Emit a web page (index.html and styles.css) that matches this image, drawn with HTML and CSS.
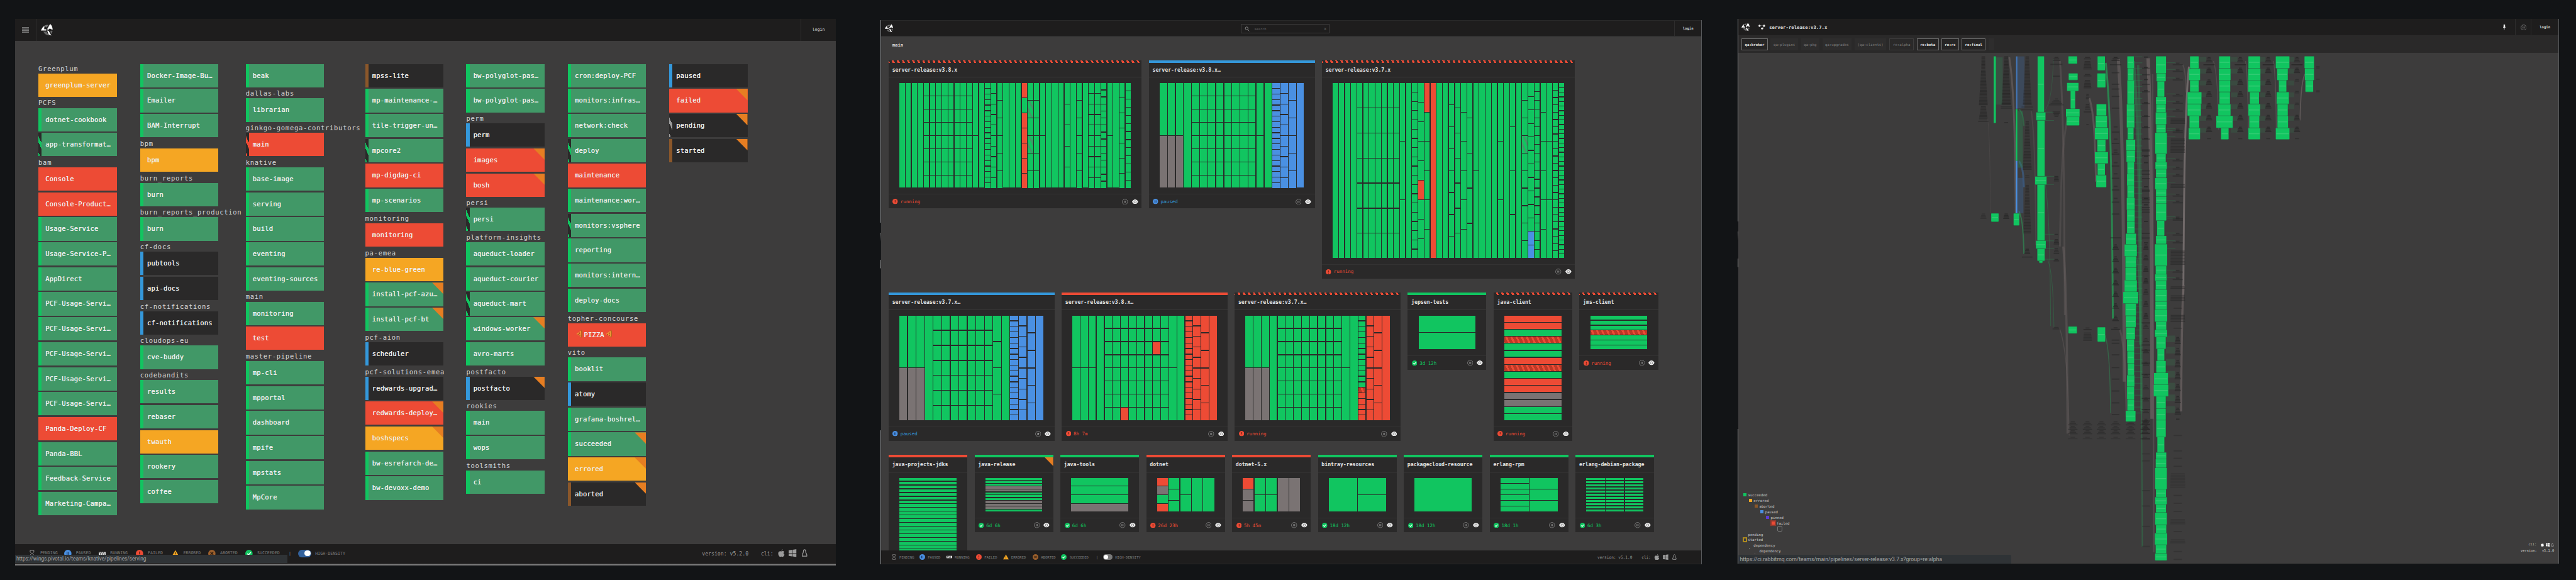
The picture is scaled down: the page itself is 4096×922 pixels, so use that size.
FILE: index.html
```html
<!DOCTYPE html>
<html lang="en">
<head>
<meta charset="utf-8">
<title>Concourse dashboards</title>
<link rel="stylesheet" href="styles.css">
</head>
<body>
<svg class="defs" width="0" height="0">
  <symbol id="i-logo" viewBox="0 0 20 20">
    <path fill="#fff" d="M0 11 Q2 6 6 3 L5.5 9 L9 9 L9 11 Z"/>
    <path fill="#777" d="M6 3 Q10 1 13 2 L9 6 Z"/>
    <path fill="#fff" d="M15.500 0 Q20 4 19.500 10 L15 7.500 L12 10 L10.500 8.600 Z"/>
    <path fill="#fff" d="M10.500 11 L13 11.500 L17.500 19.500 L13 18 Z"/>
    <path fill="#666" d="M4 13 L9.500 13 L13 19.500 Q7 18.500 4 13 Z M18 11 L19.500 12 L18 17 L15.500 13 Z"/>
  </symbol>
  <symbol id="i-pending" viewBox="0 0 12 12"><path fill="none" stroke="#9b9b9b" d="M3 1H9V3.500L6.600 6L9 8.500V11H3V8.500L5.400 6L3 3.500Z"/></symbol>
  <symbol id="i-paused" viewBox="0 0 12 12"><circle cx="6" cy="6" r="6" fill="#4a90e2"/><path stroke="#1e3c66" stroke-width="1.300" d="M4.700 3.500V8.500M7.300 3.500V8.500"/></symbol>
  <symbol id="i-running" viewBox="0 0 12 12"><path fill="#ddd" d="M0 3.500H12V8.500H0Z"/><path stroke="#333" stroke-width="1" d="M1.500 3L3.500 9M4.500 3L6.500 9M7.500 3L9.500 9"/></symbol>
  <symbol id="i-failed" viewBox="0 0 12 12"><circle cx="6" cy="6" r="6" fill="#ed4b35"/><path stroke="#5b1d14" stroke-width="1.400" d="M6 2.800V7M6 8V9.400"/></symbol>
  <symbol id="i-errored" viewBox="0 0 12 12"><path fill="#f5a623" d="M6 .5L12 11H0Z"/><path stroke="#3a2a10" stroke-width="1.200" d="M6 4V7.500M6 8.500V9.700"/></symbol>
  <symbol id="i-aborted" viewBox="0 0 12 12"><circle cx="6" cy="6" r="6" fill="#9b5f2c"/><path stroke="#2b1b0e" stroke-width="1.400" d="M3.800 3.800L8.200 8.200M8.200 3.800L3.800 8.200"/></symbol>
  <symbol id="i-succeeded" viewBox="0 0 12 12"><circle cx="6" cy="6" r="6" fill="#11c560"/><path fill="none" stroke="#fff" stroke-width="1.500" d="M3.200 6.200L5.300 8.200L9 4"/></symbol>
  <symbol id="i-pause" viewBox="0 0 12 12"><circle cx="6" cy="6" r="5.300" fill="none" stroke="#8d8d8d"/><path stroke="#9b9b9b" stroke-width="1.100" d="M4.800 4V8M7.200 4V8"/></symbol>
  <symbol id="i-play" viewBox="0 0 12 12"><circle cx="6" cy="6" r="5.300" fill="none" stroke="#8d8d8d"/><path fill="#ccc" d="M4.600 3.700L8.400 6L4.600 8.300Z"/></symbol>
  <symbol id="i-eye" viewBox="0 0 12 9"><path fill="#eee" d="M0 4.500Q2.500 0 6 0T12 4.500Q9.500 9 6 9T0 4.500Z"/><circle cx="6" cy="4.500" r="2.300" fill="none" stroke="#777"/></symbol>
  <symbol id="i-apple" viewBox="0 0 12 14"><path d="M8.600 0Q8.800 2 6.300 3.200Q6 1.300 8.600 0ZM10 7.300Q10 5.500 11.500 4.700Q9.700 2.700 6.300 4Q2.500 2.700 1 5.300Q-.3 9.500 2.600 13Q3.800 14.200 6.200 13.100Q8.800 14.200 9.800 12.900Q11.200 11.500 11.800 9.700Q10 9 10 7.300Z"/></symbol>
  <symbol id="i-windows" viewBox="0 0 12 12"><path d="M0 1.700L5.200 1V5.700H0ZM6 .9L12 0V5.700H6ZM0 6.400H5.200V11L0 10.300ZM6 6.400H12V12L6 11.100Z"/></symbol>
  <symbol id="i-linux" viewBox="0 0 12 14"><path fill="none" stroke="currentColor" stroke-width="1.400" d="M6 1Q8 1 8 4Q8 6 9.500 8.500Q10.500 10.500 10 12.500H7.500H4.500H2Q1.500 10.500 2.500 8.500Q4 6 4 4Q4 1 6 1Z"/></symbol>
  <symbol id="i-pizza" viewBox="0 0 12 14"><path fill="#f2a53a" d="M1.500 7.500L9.500 2L9.500 12.500Z"/><path fill="none" stroke="#b5651d" stroke-width="2" stroke-linecap="round" d="M10 1.500Q12 7 10 12.500"/><circle cx="7" cy="6" r="1.200" fill="#a8261b"/><circle cx="7.500" cy="9.500" r="1.100" fill="#a8261b"/><circle cx="4.500" cy="8" r=".9" fill="#a8261b"/></symbol>
</svg>

<main class="screens">
  <section class="screen screen-hd">
    <header class="topbar">
      <div class="menu"><svg width="11" height="9" viewBox="0 0 11 9"><path stroke="#777" stroke-width="1.400" d="M0 .8H11M0 3.300H11M0 5.800H11M0 8.200H11"/></svg></div>
      <svg class="logo"><use href="#i-logo"/></svg>
      <div class="login">login</div>
    </header>
    <div class="columns" id="columns"></div>
    <footer class="legend" data-legend></footer>
    <div class="status">https://wings.pivotal.io/teams/knative/pipelines/serving</div>
  </section>

  <section class="screen screen-dash">
    <header class="topbar">
      <svg class="logo"><use href="#i-logo"/></svg>
      <div class="search">
        <svg width="8" height="8" viewBox="0 0 8 8"><circle cx="3.300" cy="3" r="2.200" fill="none" stroke="#888"/><path stroke="#888" d="M5 4.800L7.300 7.500"/></svg>
        <span>search</span><span class="clear">x</span>
      </div>
      <div class="login">login</div>
    </header>
    <div class="team">main</div>
    <div class="rows" id="rows"></div>
    <footer class="legend" data-legend></footer>
  </section>

  <section class="screen screen-pipe">
    <header class="topbar">
      <svg class="logo"><use href="#i-logo"/></svg>
      <svg class="crumb" viewBox="0 0 11 8"><path stroke="#ddd" stroke-width=".6" d="M2 2H9L6 7"/><circle cx="1.800" cy="2" r="1.700" fill="#eee"/><circle cx="9.200" cy="2" r="1.700" fill="#eee"/><circle cx="6" cy="6.200" r="1.700" fill="#eee"/></svg>
      <span class="name">server-release:v3.7.x</span>
      <div class="pin"><svg width="4" height="8" viewBox="0 0 4 8"><path fill="#eee" d="M.8 0H3.200V3L4 5H2.400V8H1.600V5H0L.8 3Z"/></svg></div>
      <div class="pausebox"><svg width="9.500" height="9.500"><use href="#i-pause"/></svg></div>
      <div class="login">login</div>
    </header>
    <nav class="groups">
      <span class="group on" style="width:41.6px">qa:broker</span>
      <span class="group" style="width:43.4px">qa:plugins</span>
      <span class="group" style="width:29.5px">qa:pkg</span>
      <span class="group" style="width:46.4px">qa:upgrades</span>
      <span class="group" style="width:50.7px">(qa:clients)</span>
      <span class="group hover" style="width:39px">re:alpha</span>
      <span class="group on" style="width:34.7px">re:beta</span>
      <span class="group on" style="width:27.3px">re:rc</span>
      <span class="group on" style="width:38.2px">re:final</span>
      <span class="group" style="width:9px"></span>
    </nav>
    <svg class="graph" id="graph" viewBox="2764 84.300 1305 811.400"></svg>
    <ul class="keys">
      <li><i class="sq succeeded"></i>succeeded</li>
      <li><i class="sq errored"></i>errored</li>
      <li><i class="sq aborted"></i>aborted</li>
      <li><i class="sq paused"></i>paused</li>
      <li><i class="sq pinned"></i>pinned</li>
      <li><i class="sq failed"></i>failed</li>
      <li><i class="sq pending"></i></li>
      <li><i class="sq none"></i>pending</li>
      <li><i class="sq started"></i>started</li>
      <li><i class="sq dash"></i>dependency</li>
      <li><i class="sq dash"></i>dependency</li>
    </ul>
    <div class="versions">
      <div>cli:<svg width="5" height="6"><use href="#i-apple"/></svg><svg width="6" height="6"><use href="#i-windows"/></svg><svg width="5" height="6"><use href="#i-linux"/></svg></div>
      <div>version:<span>v5.1.0</span></div>
    </div>
    <div class="status">https://ci.rabbitmq.com/teams/main/pipelines/server-release:v3.7.x?group=re:alpha</div>
  </section>
</main>
<script src="app.js"></script>
</body>
</html>
```
FILE: styles.css
```css
* { box-sizing: border-box; }
body {
  margin: 0;
  width: 4096px;
  height: 922px;
  overflow: hidden;
  background: #121416;
  color: #e6e7e8;
  font-family: "DejaVu Sans Mono", monospace;
}
.defs { display: block; height: 0; }
.screens { display: flex; align-items: flex-start; padding-left: 24.3px; }
.screen { position: relative; flex: none; display: flex; flex-direction: column; background: #3d3c3c; overflow: hidden; }
.topbar { display: flex; align-items: center; background: #1e1d1d; flex: none; }
.login { display: flex; align-items: center; justify-content: center; align-self: stretch; border-left: 1px solid #2e2d2d; margin-left: auto; color: #ddd; }
.status {
  position: absolute; left: 0; overflow: hidden; white-space: nowrap;
  background: #2f3336; color: #a5a7a8;
  font-family: Roboto, sans-serif;
}
.legend { display: flex; align-items: center; background: #1e1d1d; color: #7d7d7d; flex: none; }
.legend .items { display: grid; align-items: center; }
.legend .item { display: flex; align-items: center; }
.legend .item svg { flex: none; }
.legend .right { display: flex; align-items: center; margin-left: auto; color: #9b9b9b; fill: #9b9b9b; white-space: pre; }
.toggle { display: flex; border-radius: 9px; background: #7a7a7a; }
.toggle::after { content: ""; background: #fff; border-radius: 50%; }

/* high density dashboard */
.screen-hd { width: 1304.8px; height: 868.6px; margin-top: 30.4px; }
.screen-hd::after { content: ""; height: 3.2px; flex: none; background: linear-gradient(#333, #8a8a8a 60%, #555); }
.screen-hd .topbar { height: 34.2px; }
.screen-hd .menu { width: 33.4px; align-self: stretch; display: flex; align-items: center; justify-content: center; border-right: 1px solid #2e2d2d; }
.screen-hd .logo { width: 19px; height: 19px; margin-left: 7.500px; }
.screen-hd .login { width: 56.3px; font-size: 6.700px; }
.columns { flex: 1; display: grid; grid-template-columns: 161.7px 167.9px 189.9px 160.9px 161.3px 161.3px 125px; padding: 37.1px 0 0 36.8px; align-content: start; }
.column { width: 124.5px; }
.group-name { height: 15.1px; line-height: 15.1px; font-size: 10.5px; letter-spacing: .7px; white-space: nowrap; color: #d6d6d6; }
.pipe { position: relative; display: flex; height: 37.15px; margin-bottom: 2.55px; background: #2a2929; }
.pipe .band { width: 5.200px; background: var(--band); }
.pipe .name { flex: 1; padding-left: 6px; line-height: 37px; font-size: 10.5px; letter-spacing: .16px; white-space: pre; color: #eee; text-shadow: 0 0 .4px #eee; }
.pipe .name svg { width: 11.500px; height: 13px; vertical-align: -1px; margin: 0 1.500px; }
.pipe.green { --band: #11c560; background: #419867; }
.pipe.red { --band: #ed4b35; background: #ed4b35; }
.pipe.yellow { --band: #f5a623; background: #f5a623; }
.pipe.blue { --band: #3498db; }
.pipe.brown { --band: #8b572a; }
.pipe.grey { --band: #9b9b9b; }
.pipe.run .band { background: repeating-linear-gradient(-115deg, #2a2929 0, #2a2929 6.800px, var(--band) 6.800px, var(--band) 10.900px); }
.corner { position: absolute; right: 0; top: 0; background: #e67e22; width: 18px; height: 18.200px; clip-path: polygon(0 0, 100% 0, 100% 100%); }
.screen-hd .legend { height: 30.6px; padding: 0 44px 2px 21px; font-size: 6.600px; }
.screen-hd .items { grid-template-columns: 56.8px 54.6px 59.8px 56.4px 58.5px 59px 68.5px 15.2px auto; }
.screen-hd .item svg { width: 11.800px; height: 11.800px; margin-right: 6.800px; }
.screen-hd .toggle { width: 20.8px; height: 12px; padding: 1.200px; justify-content: flex-end; background: #33619b; margin-right: 6.500px; }
.screen-hd .toggle::after { width: 9.600px; }
.screen-hd .right { font-size: 8.200px; }
.screen-hd .right svg { width: 12.500px; height: 12.500px; margin-left: 6px; }
.screen-hd .status { top: 852.1px; width: 433.2px; height: 13px; line-height: 13px; padding-left: 1.700px; font-size: 8.250px; }

/* pipeline previews */
.screen-dash { width: 1306.2px; height: 865.7px; margin: 31.8px 0 0 71.1px; border-right: 1px solid #57595b; }
.screen-dash::before, .screen-pipe::before {
  content: ""; position: absolute; left: 0; top: 0; bottom: 0; width: 1.300px; z-index: 2;
  background: linear-gradient(#8a8c8e 322px, #17181a 322px, #17181a 338px, #777 338px, #17181a 352px, #17181a 381px, #888 381px, #999 394px, #17181a 395px, #17181a 652px, #8a8c8e 652px);
}
.screen-dash .topbar { height: 26.3px; border-top: 1px solid #292929; border-bottom: .7px solid #292929; position: relative; }
.screen-dash .logo { width: 13.200px; height: 14px; margin-left: 6.400px; }
.search { position: absolute; left: 573.2px; top: 5.700px; width: 140.8px; height: 14.8px; border: 1px solid #3d3c3c; display: flex; align-items: center; padding: 0 4px 0 5px; font-size: 5.300px; color: #606060; }
.search svg { margin-right: 7px; }
.search .clear { margin-left: auto; font-size: 7px; }
.screen-dash .login, .screen-pipe .login { width: 43.5px; font-size: 5.600px; font-weight: bold; }
.team { height: 38px; padding: 8.500px 0 0 18.500px; font-size: 7.300px; line-height: 10px; font-weight: bold; color: #ddd; }
.rows { flex: 1; overflow: hidden; padding-left: 12.8px; display: flex; flex-direction: column; gap: 22.8px; }
.row { display: flex; gap: 11.450px; align-items: flex-start; flex: none; }
.card { position: relative; flex: none; background: #2a2929; display: flex; flex-direction: column; }
.card .bar { height: 3.700px; background: var(--bar); }
.card.run .bar { background: repeating-linear-gradient(-115deg, #2a2929 0, #2a2929 4.300px, var(--bar) 4.300px, var(--bar) 7.350px); }
.card .title { height: 23.5px; border-bottom: 1.200px solid #3a3939; padding: 0 0 1px 5.700px; font-size: 8.200px; line-height: 22.5px; font-weight: bold; white-space: nowrap; color: #e2e2e2; }
.card .corner { top: 3.700px; width: 13.500px; height: 13.800px; }
.card .mosaic { margin: 9.200px 17.200px 10px; }
.mosaic { display: flex; gap: 1.300px; }
.mosaic .mc { flex: 1; display: flex; flex-direction: column; gap: 1.300px; }
.mosaic i { flex: 1; background: #11c560; min-height: 0; }
.mosaic i.r { background: #ed4b35; }
.mosaic i.b { background: #4a90e2; }
.mosaic i.n { background: #7a7373; }
.mosaic i.s { background: repeating-linear-gradient(-115deg, #bd3826 0, #bd3826 4.500px, #ed4b35 4.500px, #ed4b35 7.400px); }
.mosaic i.t { background: repeating-linear-gradient(-115deg, #11c560 0, #11c560 4.500px, #419867 4.500px, #419867 7.400px); }
.card .foot { height: 22.7px; border-top: 1.200px solid #333232; display: flex; align-items: center; padding: 0 5.500px 0 6.500px; font-size: 7.500px; color: var(--ink); }
.card .foot .st { width: 8.600px; height: 8.600px; margin-right: 3.700px; }
.card .foot .ctl { width: 9.600px; height: 9.600px; margin-left: auto; }
.card .foot .eye { width: 9.800px; height: 7.600px; margin-left: 6px; }
.card.red { --bar: #ed4b35; --ink: #ed4b35; }
.card.blue { --bar: #3498db; --ink: #3498db; }
.card.green { --bar: #11c560; --ink: #11c560; }
.screen-dash .legend { height: 22.4px; padding: 0 39px 0 16.600px; font-size: 5.600px; position: relative; z-index: 1; border-bottom: 1px solid #292929; }
.screen-dash .items { grid-template-columns: 45.1px 42.9px 47.3px 42.5px 47.3px 45.5px 55.3px 11.1px auto; }
.screen-dash .item svg { width: 9px; height: 9px; margin-right: 4.300px; }
.screen-dash .toggle { width: 15px; height: 9px; padding: 1px; margin-right: 4.500px; }
.screen-dash .toggle::after { width: 7px; }
.screen-dash .right { font-size: 6.150px; }
.screen-dash .right svg { width: 8.800px; height: 9.300px; margin-left: 5px; }

/* pipeline graph */
.screen-pipe { width: 1305.9px; height: 865.3px; margin: 30.4px 0 0 56.6px; border-right: 1px solid #57595b; }
.screen-pipe .topbar { height: 25.9px; }
.screen-pipe .logo { width: 13.200px; height: 14px; margin-left: 6.200px; }
.screen-pipe .crumb { width: 10.800px; height: 8px; margin: 0 6.500px 0 13.500px; }
.screen-pipe .topbar .name { font-size: 7.300px; font-weight: bold; color: #ddd; }
.screen-pipe .pin { margin-left: auto; padding-right: 15.500px; display: flex; }
.screen-pipe .pausebox { width: 25px; align-self: stretch; display: flex; align-items: center; justify-content: center; border-left: 1px solid #2e2d2d; }
.screen-pipe .login { margin-left: 0; }
.groups { display: flex; gap: 4.700px; height: 28px; padding: 5px 0 0 6.200px; background: #2a2929; font-size: 5.700px; flex: none; align-items: flex-start; }
.group { flex: none; height: 18.600px; display: flex; align-items: center; justify-content: center; background: #2e2d2d; color: #7d7d7d; border: 1px solid #2e2d2d; }
.group.hover { border-color: #3d3c3c; background: #2a2929; }
.group.on { border-color: #6e6e6e; background: #262525; color: #e6e7e8; font-weight: bold; }
.graph { display: block; width: 1305px; height: 811.4px; flex: none; margin-left: 1px; }
.keys { position: absolute; left: 8.500px; top: 752px; margin: 0; padding: 0; list-style: none; font-size: 5.700px; color: #ccc; }
.keys li { height: 8.960px; display: flex; align-items: center; }
.keys li:nth-child(2), .keys li:nth-child(10) { margin-left: 8.900px; }
.keys li:nth-child(3), .keys li:nth-child(11) { margin-left: 18px; }
.keys li:nth-child(4) { margin-left: 27px; }
.keys li:nth-child(5) { margin-left: 36px; }
.keys li:nth-child(6) { margin-left: 45.500px; }
.keys li:nth-child(7) { margin-left: 54px; }
.sq { width: 5px; height: 5px; margin: 0 2.500px 0 .5px; }
.sq.succeeded { background: #11c560; }
.sq.errored { background: #f5a623; }
.sq.aborted { background: #8b572a; }
.sq.paused { background: #4a90e2; }
.sq.pinned { background: #5c3bd1; }
.sq.failed { background: #ed4b35; box-shadow: 0 0 1px 1.800px #8f3a2f; }
.sq.pending { width: 8.500px; height: 9px; border: 1.200px solid #777; border-radius: 2px; }
.sq.started { width: 7px; height: 8px; margin: 0 1.300px 0 -.5px; border: 2px solid #ad8a1e; }
.sq.dash { width: 1px; height: 1px; margin-right: 6.500px; background: #999; align-self: flex-end; }
.versions { position: absolute; right: 6.500px; top: 831px; font-size: 5.400px; line-height: 9.400px; color: #ccc; fill: #fff; }
.versions div { display: flex; justify-content: flex-end; align-items: center; }
.versions div:first-child svg { margin-left: 2.500px; }
.versions div:first-child svg:first-child { margin-left: 7px; }
.versions span { margin-left: 8px; }
.screen-pipe .status { top: 851.2px; left: 1px; width: 434.5px; height: 14.1px; line-height: 14px; padding-left: 2.500px; font-size: 8.600px; border-radius: 0 2px 0 0; }
```
FILE: app.js
```js
const use = (id, cls) => `<svg${cls ? ` class="${cls}"` : ""}><use href="#i-${id}"/></svg>`;

/* ---- high density columns: "#team" or "state name", "/" = running, "^" = resource error ---- */
const columns = [
  ["#Greenplum", "yellow greenplum-server", "#PCFS", "green dotnet-cookbook", "green/ app-transformat…", "#bam",
   "red Console", "red Console-Product…", "green Usage-Service", "green Usage-Service-P…", "green AppDirect",
   "green PCF-Usage-Servi…", "green PCF-Usage-Servi…", "green PCF-Usage-Servi…", "green PCF-Usage-Servi…", "green PCF-Usage-Servi…",
   "red Panda-Deploy-CF", "green Panda-BBL", "green Feedback-Service", "green Marketing-Campa…"],
  ["green Docker-Image-Bu…", "green Emailer", "green BAM-Interrupt", "#bpm", "yellow bpm", "#burn_reports", "green burn",
   "#burn_reports_production", "green burn", "#cf-docs", "blue pubtools", "blue api-docs", "#cf-notifications",
   "blue cf-notifications", "#cloudops-eu", "green cve-buddy", "#codebandits", "green results", "green rebaser",
   "yellow twauth", "green rookery", "green coffee"],
  ["green beak", "#dallas-labs", "green librarian", "#ginkgo-gomega-contributors", "red/ main", "#knative",
   "green base-image", "green serving", "green build", "green eventing", "green eventing-sources", "#main",
   "green monitoring", "red test", "#master-pipeline", "green mp-cli", "green mpportal", "green dashboard",
   "green mpife", "green mpstats", "green MpCore"],
  ["brown mpss-lite", "green mp-maintenance-…", "green tile-trigger-un…", "green/ mpcore2", "red mp-digdag-ci",
   "green mp-scenarios", "#monitoring", "red monitoring", "#pa-emea", "yellow re-blue-green", "green^ install-pcf-azu…",
   "green^ install-pcf-bt", "#pcf-aion", "blue scheduler", "#pcf-solutions-emea", "blue redwards-upgrad…",
   "red^ redwards-deploy…", "yellow^ boshspecs", "green bw-esrefarch-de…", "green bw-devoxx-demo"],
  ["green bw-polyglot-pas…", "green bw-polyglot-pas…", "#perm", "blue perm", "red^ images", "red^ bosh", "#persi",
   "green/ persi", "#platform-insights", "green aqueduct-loader", "green aqueduct-courier", "green/ aqueduct-mart",
   "green^ windows-worker", "green avro-marts", "#postfacto", "blue^ postfacto", "#rookies", "green main",
   "green wops", "#toolsmiths", "green ci"],
  ["green cron:deploy-PCF", "green monitors:infras…", "green network:check", "green/ deploy", "red maintenance",
   "green maintenance:wor…", "green/ monitors:vsphere", "green reporting", "green monitors:intern…", "green deploy-docs",
   "#topher-concourse", "red *PIZZA*", "#vito", "green booklit", "blue atomy", "green grafana-boshrel…",
   "green^ succeeded", "yellow^ errored", "brown^ aborted"],
  ["blue paused", "red^ failed", "grey/^ pending", "brown^ started"],
];
document.getElementById("columns").innerHTML = columns.map(col => `<div class="column">${col.map(entry => {
  if (entry[0] === "#") return `<div class="group-name">${entry.slice(1)}</div>`;
  const [flags, name] = entry.split(" ");
  const state = flags.replace(/[/^]/g, "");
  return `<div class="pipe ${state}${flags.includes("/") ? " run" : ""}"><span class="band"></span>` +
    `<span class="name">${name.replace(/\*/g, use("pizza"))}</span>${flags.includes("^") ? '<span class="corner"></span>' : ""}</div>`;
}).join("")}</div>`).join("");

/* ---- pipeline preview cards ---- */
/* column spec: "count", "count color", or a string of cell colours; "xN" repeats the column */
const G = "g";
const expand = spec => spec.split(",").flatMap(part => {
  const [body, times] = part.trim().split("x");
  const m = body.match(/^(\d+)([a-z]?)$/);
  const cells = m ? (m[2] || G).repeat(+m[1]) : body;
  return Array(+(times || 1)).fill(cells);
});
const wide = "1x4,8x8,2,1,19,10,6,1x3,rgrrrrr,gtgtgg,6,2,1x3,5,1,6,1,10x2,15,2,1,7,13";
const tall = "1x4,7x7,3,1,19,gggggrggg,rggggg,1r,1x2,8,7,6,5,2,1x3,3,1,4,1,gggtgggggg,gggggggggggbb,20,6,3,24,38";
const rows = [
  [["red run", "server-release:v3.8.x", wide, 402.4, 166, "running"],
   ["blue", "server-release:v3.8.x…", "gnx3,1,8x8,2,1,19b,10b,6b,1b", 263.7, 166, "paused"],
   ["red run", "server-release:v3.7.x", tall, 402.4, 277.5, "running"]],
  [["blue", "server-release:v3.7.x…", "gnx3,1,7x7,4,1,19b,10b,6b,1b", 263.7, 166, "paused", "play"],
   ["red", "server-release:v3.8.x…", "2x3,1,8x2,gggggggr,8x3,ggrggggg,8,2,1,19r,10r,6r,1r", 263.7, 166, "8h 7m"],
   ["red run", "server-release:v3.7.x…", "gnx3,1,8x8,2,1,gggggggggggggsrrrrr,10r,6r,1r", 263.7, 166, "running"],
   ["green", "jepsen-tests", "2", 125.1, 53.6, "3d 12h"],
   ["red run", "java-client", "rrgsggrsgrrnngg", 125.1, 166, "running"],
   ["red run", "jms-client", "gggsggg", 125.1, 53.6, "running"]],
  [["red", "java-projects-jdks", "28", 125.1, 166, "running"],
   ["green", "java-release", "gggnngggnnng", 125.1, 53.6, "6d 6h", "pause", true],
   ["green", "java-tools", "gggn", 125.1, 53.6, "6d 6h"],
   ["red", "dotnet", "rngr,3,2,1x2", 125.1, 53.6, "26d 23h"],
   ["red", "dotnet-5.x", "rnn,2x2,1nx2", 125.1, 53.6, "5h 45m"],
   ["green", "bintray-resources", "1,2", 125.1, 53.6, "18d 12h"],
   ["green", "packagecloud-resource", "1", 125.1, 53.6, "18d 12h"],
   ["green", "erlang-rpm", "6,3", 125.1, 53.6, "18d 1h"],
   ["green", "erlang-debian-package", "11x3", 125.1, 53.6, "6d 3h"]],
];
const statusIcon = { red: "failed", blue: "paused", green: "succeeded" };
document.getElementById("rows").innerHTML = rows.map(row => `<div class="row">${row.map(([cls, title, spec, w, h, text, ctl, corner]) =>
  `<article class="card ${cls}" style="width:${w}px"><div class="bar"></div><div class="title">${title}</div>${corner ? '<span class="corner"></span>' : ""}` +
  `<div class="mosaic" style="height:${h}px">${expand(spec).map(c => `<div class="mc">${[...c].map(k => `<i class="${k}"></i>`).join("")}</div>`).join("")}</div>` +
  `<div class="foot">${use(statusIcon[cls.split(" ")[0]], "st")}<span>${text}</span>${use(ctl || "pause", "ctl")}${use("eye", "eye")}</div></article>`
).join("")}</div>`).join("");

/* ---- legends ---- */
const states = ["pending", "paused", "running", "failed", "errored", "aborted", "succeeded"];
document.querySelectorAll("[data-legend]").forEach((el, i) => {
  el.innerHTML = `<div class="items">${states.map(s => `<span class="item">${use(s)}${s.toUpperCase()}</span>`).join("")}` +
    `<span>|</span><span class="item"><span class="toggle"></span>HIGH-DENSITY</span></div>` +
    `<div class="right">version: v5.${2 - i}.0    cli:${use("apple")}${use("windows")}${use("linux")}</div>`;
});

/* ---- pipeline graph ---- */
const LOW = 1558.8;
const left = { x: v => 2733.4 + v * 0.43364 };
const right = { x: v => 3399.7 + v * 0.44405 };
const Y = v => v * 0.29488;
const out = [];
const rect = (s, x0, x1, y0, y1, fill, o = 1) =>
  out.push(`<rect x="${s.x(x0).toFixed(2)}" y="${Y(y0).toFixed(2)}" width="${(s.x(x1) - s.x(x0)).toFixed(2)}" height="${Y(y1 - y0).toFixed(2)}" fill="${fill}" opacity="${o}"/>`);
const edge = (s, x0, y0, x1, y1, color, w, o) => {
  const a = s.x(x0), b = s.x(x1), c = Y(y0), d = Y(y1);
  out.push(`<path d="M${a} ${c}C${a + (b - a) * 0.8} ${c + (d - c) * 0.2} ${a + (b - a) * 0.9} ${c + (d - c) * 0.6} ${b} ${d}" fill="none" stroke="${color}" stroke-width="${w}" opacity="${o}"/>`);
};
const fan = (s, x0, x1, y0, y1, color, o) => rect(s, x0, x1, y0, y1, color, o);
/* a pile of resource names, widening downwards */
const stack = (s, cx, y0, y1, w0, w1, o = 0.6, pitch = 8) => {
  const n = Math.max(1, Math.round((y1 - y0) / pitch));
  for (let i = 0; i < n; i++) {
    const w = w0 + (w1 - w0) * (n > 1 ? i / (n - 1) : 0);
    rect(s, cx - w / 2, cx + w / 2, y0 + i * pitch, y0 + i * pitch + pitch * 0.62, "#242323", o);
  }
};
const bars = (s, cx, w, ys, off = 0, o = 0.5) => ys.forEach(y => rect(s, cx - w / 2, cx + w / 2, y + off - 3, y + off + 3, "#242323", o));
const jobs = (s, off, list) => list.forEach(([x0, x1, y0, y1]) => {
  rect(s, x0 + 1, x1 - 1, y0 + off, y1 + off + 3, "#1f7d48");
  rect(s, x0, x1, y0 + off, y1 + off, "#11c560");
  const m = (y0 + y1) / 2 + off;
  if (x1 - x0 > 15) rect(s, x0 + 2, x1 - 2, m - 2, m + 3, "#4fd183", 0.55);
});

/* dependency lines */
const taupe = "#6b6262";
edge(left, 985, 640, 995, 1150, taupe, 1, 0.25);
edge(left, 1064, 310, 1088, 1150, taupe, 3, 0.6);
edge(left, 1145, 600, 1162, 1320, taupe, 2, 0.3);
edge(left, 1250, 330, 1268, 1700, taupe, 3, 0.4);
edge(left, 1278, 640, 1250, 1330, taupe, 3, 0.35);
edge(left, 1262, 1330, 1278, 780 + LOW, taupe, 3.5, 0.45);
edge(left, 1248, 210 + LOW, 1284, 790 + LOW, taupe, 1.5, 0.4);
edge(left, 1358, 530, 1382, 980, taupe, 3, 0.6);
edge(left, 1464, 320, 1486, 500 + LOW, taupe, 5, 0.6);
edge(left, 1470, 220 + LOW, 1494, 690 + LOW, taupe, 3, 0.4);
edge(left, 1418, 340, 1444, 160 + LOW, "#22a457", 3, 0.7);
edge(left, 1416, 250 + LOW, 1436, 670 + LOW, "#2f8a54", 1.5, 0.5);
edge(left, 1196, 990, 1216, 200 + LOW, "#2f7a4c", 1, 0.5);
edge(left, 1205, 1400, 1228, 205 + LOW, "#2f7a4c", 1, 0.5);
edge(left, 1194, 600, 1226, 320, "#2f7a4c", 1, 0.4);
edge(left, 1100, 590, 1118, 680, "#2f7a4c", 2, 0.6);
edge(left, 1100, 870, 1118, 1010, "#3c6ba5", 3, 0.5);
edge(left, 1100, 1140, 1118, 1370, "#2f8a54", 2, 0.7);
edge(left, 1520, 330, 1545, 300 + LOW, "#2b8f53", 4, 0.45);
edge(left, 1535, 1400, 1552, 1390 + LOW, "#2b8f53", 2, 0.4);
edge(right, 0, 350, 12, 660 + LOW, "#2b8f53", 4, 0.35);
edge(right, 36, 315, 50, 700 + LOW, taupe, 5.500, 0.75);
edge(right, 52, 400, 56, 1420 + LOW, taupe, 2.500, 0.4);
edge(right, 160, 350, 172, 500, taupe, 2, 0.4);
edge(right, 182, 360, 162, 30 + LOW, "#736b6b", 3, 0.95);
edge(right, 163, -20 + LOW, 154, 660 + LOW, taupe, 3.500, 0.75);
edge(right, 270, 330, 288, 700, taupe, 1.500, 0.4);
edge(right, 385, 330, 395, 700, taupe, 1.500, 0.5);
edge(right, 485, 330, 495, 700, taupe, 1.500, 0.5);
edge(right, 597, 400, 580, 650, taupe, 1.800, 0.7);
fan(left, 1015, 1040, 310, 565, "#2c8a52", 0.25);
fan(left, 1094, 1120, 305, 585, "#3c6ba5", 0.3);
fan(left, 1096, 1114, 600, 905, "#2c8a52", 0.35);
fan(left, 1096, 1116, 960, 1150, "#3c6ba5", 0.35);
for (const y of [605, 650, 951, 995, 1263, 1299, 1342, 1398])
  rect(left, 1194, 1228, y - 1, y + 2, "#2c8a52", 0.45);
for (let y = 305; y < 690 + LOW; y += 32) rect(left, 1522, 1552, y, y + 5, "#2c8a52", 0.3);

/* resources */
stack(left, 969, 305, 378, 13, 15, 0.75, 6);
stack(left, 969, 378, 570, 16, 32, 0.7, 6);
stack(left, 969, 574, 645, 18, 32, 0.65, 6);
bars(left, 969, 38, [655]);
stack(left, 1053, 305, 570, 14, 34, 0.75, 6);
bars(left, 1053, 40, [576, 585], 0, 0.4);
stack(left, 1130, 305, 570, 12, 32, 0.6, 6);
bars(left, 1130, 42, [578, 592], 0, 0.35);
stack(left, 1130, 655, 915, 12, 32, 0.6);
stack(left, 1130, 946, 960, 14, 16, 0.4);
stack(left, 1130, 998, 1262, 12, 28, 0.55);
stack(left, 1130, 1342, 1375, 12, 22, 0.7);
bars(left, 1130, 38, [1387], 0, 0.4);
bars(left, 1053, 14, [662]);
stack(left, 969, 1152, 1185, 12, 22, 0.4);
stack(left, 1053, 1152, 1185, 12, 22, 0.7);
stack(left, 1237, 308, 332, 14, 26, 0.6);
bars(left, 1237, 44, [348]);
bars(left, 1237, 26, [412]);
stack(left, 1237, 532, 568, 10, 54, 0.45);
stack(left, 1237, 602, 630, 28, 14, 0.6);
stack(left, 1237, 950, 978, 14, 18, 0.7);
for (const [a, b] of [[1262, 1272], [1290, 1325], [1340, 1372], [1397, 1415]]) stack(left, 1237, a, b, 12, 20, 0.65);
stack(left, 1237, 205 + LOW, 220 + LOW, 16, 28, 0.5);
for (const [a, b, w] of [[308, 325, 26], [330, 378, 30], [400, 418, 28], [432, 482, 28], [507, 535, 12], [563, 598, 18], [602, 612, 40], [670, 676, 12]])
  stack(left, 1351, a, b, w * 0.7, w, 0.6);
stack(left, 1351, 208 + LOW, 224 + LOW, 14, 30, 0.6);
stack(left, 1351, 235 + LOW, 280 + LOW, 26, 32, 0.45);
stack(left, 1454, 308, 330, 14, 30, 0.8);
bars(left, 1454, 42, [350]);
bars(left, 1454, 28, [393, 455, 481, 521, 584, 713, 774, 832, 896, 962, 1025, 1091, 1155]);
bars(left, 1454, 14, [685, 751, 810, 822, 878, 938, 1006, 1070]);
bars(left, 1454, 38, [1283]);
for (const y of [1318, 1383, 1445, 1510, 1573, 1636, 1703]) stack(left, 1454, y, y + 34, 8, 24, 0.65);
stack(left, 1454, 207 + LOW, 226 + LOW, 14, 32, 0.7);
bars(left, 1454, 28, [276, 293, 355, 424, 486, 550, 614, 677], LOW);
for (const cx of [1297, 1351, 1402, 1454, 1509, 1562]) {
  for (const y of [714, 738, 762]) stack(left, cx, y + LOW, y + LOW + 24, 14, 34, 0.5);
  stack(left, cx, 797 + LOW, 813 + LOW, 16, 34, 0.35);
}
bars(right, 28, 14, [309, 365, 430, 490, 555, 626, 685, 748, 843, 878, 1008, 1070, 1105, 1195, 1310], 0, 0.7);
bars(right, 28, 28, [369, 404, 456, 496, 559, 629, 689, 751, 809, 815, 840, 922, 940, 964, 1026, 1032, 1068, 1078, 1092, 1120, 1132, 1145, 1259, 1284], 0, 0.5);
for (const y of [1318, 1375, 1437, 1500, 1560, 1625, 1690]) stack(right, 28, y, y + 32, 10, 18, 0.7);
bars(right, 28, 30, [183, 302, 330, 400, 460, 590, 650, 712, 730, 757, 778, 808], LOW, 0.6);
for (const y of [193, 265, 325, 392, 458, 520, 585, 648, 700, 735]) stack(right, 28, y + LOW, y + LOW + 26, 10, 22, 0.55);
bars(right, 28, 28, [889, 927, 1087, 1170, 1280, 1388], LOW, 0.3);
const rightList = [350, 386, 432, 518, 558, 600, 706, 715, 868, 912, 950, 1058, 1094, 1180, 1188, 1268, 1310, 1468, 1508];
bars(right, 142, 36, rightList, 0, 0.45);
bars(right, 142, 12, rightList.map(y => y - 8), 0, 0.5);
for (const [a, b] of [[640, 672], [748, 830], [994, 1020], [1352, 1432], [1545, 1560], [35 + LOW, 68 + LOW], [140 + LOW, 176 + LOW]])
  stack(right, 142, a, b, 50, 52, 0.5);
for (const [a, b] of [[994, 1076], [1240, 1268], [1350, 1376]]) stack(right, 142, a + LOW, b + LOW, 50, 54, 0.3);
bars(right, 142, 30, [104, 212, 790, 873, 913, 956, 1113, 1155, 1200, 1308, 1415, 1458], LOW, 0.35);
for (const y of [259, 320, 385, 450, 514, 577, 640]) {
  stack(right, 142, y + LOW, y + LOW + 36, 10, 22, 0.7);
  fan(right, 100, 132, y + LOW - 8, y + LOW + 28, "#3a6a4a", 0.35);
}
bars(right, 142, 12, [702], LOW, 0.7);
for (const y of [...rightList, 640, 748, 994, 1352]) rect(right, 101, 134, y - 13, y - 9, "#2c8a52", 0.3);
for (const cx of [254, 366, 466, 569]) {
  for (let k = 0; k < 7; k++) {
    const y = 308 + k * 63.7;
    fan(right, cx - 34, cx - 10, y, y + 26, "#2c8a52", 0.18);
    if (cx === 569 && (k === 2 || k === 3 || k === 4)) stack(right, cx, y - 8, y + 4, 12, 16, 0.5);
    else stack(right, cx, y + (k ? -6 : 0), y + 28, 10, 22, 0.7);
  }
  bars(right, cx, 40, [350], 0, 0.7);
  bars(right, cx, 14, [748], 0, 0.5);
}
bars(right, 644, 12, [360, 368, 429, 490, 496], 0, 0.35);

/* jobs */
jobs(left, 0, [[1007, 1015, 305, 663], [998, 1025, 1152, 1195], [1088, 1094, 589, 868], [1080, 1101, 1152, 1215],
  [1168, 1192, 305, 604], [1163, 1197, 607, 648], [1167, 1194, 651, 950], [1159, 1201, 953, 995], [1167, 1194, 997, 1297],
  [1162, 1198, 1299, 1340], [1167, 1194, 1343, 1406], [1174, 1186, 1408, 1417],
  [1281, 1313, 305, 343], [1282, 1315, 397, 431], [1276, 1318, 448, 490], [1289, 1306, 491, 586], [1272, 1322, 588, 630], [1274, 1321, 632, 676],
  [1388, 1415, 305, 379], [1387, 1417, 397, 471], [1384, 1420, 563, 623], [1381, 1423, 626, 687], [1378, 1427, 690, 751],
  [1387, 1417, 754, 817], [1378, 1426, 821, 881], [1388, 1415, 884, 943], [1383, 1420, 946, 1009],
  [1497, 1521, 305, 368], [1498, 1520, 370, 432], [1497, 1522, 434, 560], [1495, 1523, 563, 625], [1495, 1523, 627, 688],
  [1498, 1520, 690, 751], [1493, 1526, 754, 812], [1494, 1525, 814, 873], [1497, 1522, 876, 938], [1496, 1522, 940, 1002],
  [1497, 1522, 1004, 1066], [1495, 1524, 1068, 1132], [1496, 1524, 1134, 1194], [1496, 1524, 1196, 1258], [1491, 1529, 1261, 1317],
  [1487, 1532, 1319, 1381], [1490, 1530, 1383, 1443], [1490, 1530, 1445, 1510], [1487, 1532, 1512, 1573]]);
rect(left, 1089, 1094, 305, 587, "#4377b8");
rect(left, 1088, 1094, 868, 1150, "#4a90e2");
jobs(left, LOW, [[1281, 1312, 203, 238], [1388, 1416, 207, 283], [1482, 1537, 16, 77], [1490, 1529, 79, 143], [1491, 1528, 146, 205],
  [1493, 1525, 208, 270], [1496, 1522, 272, 334], [1497, 1522, 336, 400], [1498, 1522, 402, 463], [1496, 1523, 465, 526],
  [1496, 1522, 528, 593], [1497, 1522, 596, 655], [1491, 1527, 657, 713]]);
jobs(right, 0, [[64, 100, 305, 395], [66, 99, 397, 438], [69, 94, 440, 522], [64, 100, 524, 561], [65, 99, 564, 605], [63, 101, 607, 670],
  [65, 99, 672, 715], [61, 103, 717, 829], [65, 99, 831, 874], [62, 103, 876, 912], [64, 101, 914, 958], [61, 103, 961, 1020],
  [64, 101, 1022, 1060], [64, 101, 1062, 1098], [64, 101, 1100, 1189], [68, 94, 1191, 1271], [64, 101, 1273, 1315],
  [60, 104, 1318, 1433], [63, 101, 1436, 1478], [61, 102, 1480, 1514], [63, 101, 1517, 1561], [62, 103, 1563, 1624]]);
jobs(right, LOW, [[62, 103, 68, 110], [60, 104, 112, 175], [64, 101, 177, 219], [60, 104, 221, 257], [65, 99, 259, 322], [69, 94, 324, 386],
  [65, 99, 388, 451], [57, 107, 453, 515], [56, 108, 517, 577], [65, 99, 579, 644], [65, 99, 646, 706], [65, 99, 708, 797],
  [69, 94, 799, 880], [64, 101, 882, 916], [63, 101, 918, 963], [61, 103, 965, 1078], [64, 100, 1080, 1121], [61, 103, 1123, 1160],
  [64, 100, 1162, 1204], [61, 103, 1206, 1270], [64, 101, 1273, 1315], [60, 104, 1317, 1378], [63, 101, 1380, 1424], [61, 103, 1426, 1462]]);
const tiers = [[305, 368], [371, 432], [434, 495], [498, 560], [563, 624], [626, 689], [692, 751]];
[
  [[186, 217], [182, 222], [186, 217], [177, 227], [177, 225], [184, 219], [181, 222]],
  [[290, 330], [289, 331], [290, 330], [291, 329], [287, 331], [280, 339], [297, 324]],
  [[395, 437], [394, 438], [394, 438], [400, 433], [395, 437], [398, 434], [395, 437]],
  [[493, 542], [498, 536], [504, 531], [496, 540], [499, 536], [499, 537], [493, 542]],
  [[596, 630], [597, 630], [599, 627]],
].forEach(col => jobs(right, 0, col.map((x, i) => [...x, ...tiers[i]])));
document.getElementById("graph").innerHTML = out.join("");
```
